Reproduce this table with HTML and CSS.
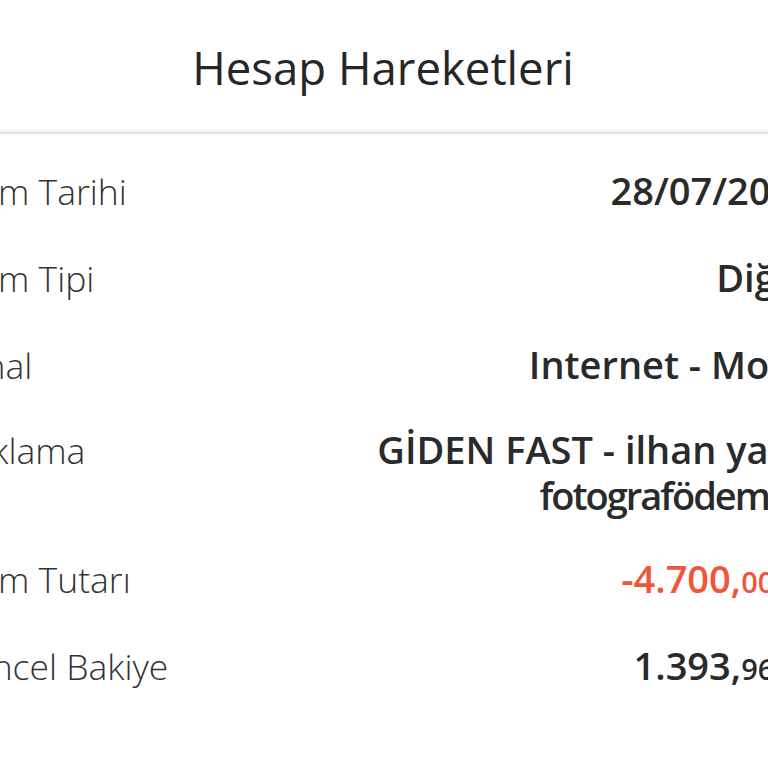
FILE: index.html
```html
<!DOCTYPE html>
<html lang="tr">
<head>
<meta charset="utf-8">
<title>Hesap Hareketleri</title>
<link rel="stylesheet" href="styles.css">
</head>
<body>
<main class="sheet">
  <header class="sheet-header">
    <h1 class="sheet-title">Hesap Hareketleri</h1>
  </header>
  <dl class="details">
    <div class="row">
      <dt class="label">İşlem Tarihi</dt>
      <dd class="value">28/07/2023</dd>
    </div>
    <div class="row">
      <dt class="label">İşlem Tipi</dt>
      <dd class="value">Diğer</dd>
    </div>
    <div class="row">
      <dt class="label">Kanal</dt>
      <dd class="value">Internet - Mobil</dd>
    </div>
    <div class="row">
      <dt class="label">Açıklama</dt>
      <dd class="value">GİDEN FAST - ilhan yalın<br><span class="tight">fotografödemesi</span></dd>
    </div>
    <div class="row">
      <dt class="label">İşlem Tutarı</dt>
      <dd class="value negative">-4.700,<span class="cents">00 TL</span></dd>
    </div>
    <div class="row">
      <dt class="label">Güncel Bakiye</dt>
      <dd class="value">1.393,<span class="cents">96 TL</span></dd>
    </div>
  </dl>
</main>
</body>
</html>
```
FILE: styles.css
```css
html, body {
  margin: 0;
  padding: 0;
  background: #ffffff;
}
body {
  width: 768px;
  height: 768px;
  overflow: hidden;
  font-family: "Open Sans", "Noto Sans", sans-serif;
  color: #2b2b2b;
}
.sheet {
  width: 862px;
  margin-left: -48px;
}
.sheet-header {
  padding: 37px 0 34px;
  border-bottom: 2px solid #dfe6ea;
  box-shadow: 0 -3px 0 #f2f7f9 inset;
  text-align: center;
}
.sheet-title {
  margin: 0;
  font-size: 45.5px;
  line-height: 61px;
  font-weight: 400;
  color: #262626;
}
.details {
  margin: 0 0 0 -7px;
  padding: 13px 0 0;
}
.row {
  box-sizing: border-box;
  min-height: 87px;
  display: grid;
  grid-template-columns: auto 1fr;
  align-items: baseline;
  align-content: center;
  padding: 18px 0;
}
.label {
  margin: 0;
  font-size: 35.5px;
  line-height: 46px;
  font-weight: 300;
  color: #333333;
}
.value {
  margin: 0;
  font-size: 38px;
  line-height: 46px;
  font-weight: 600;
  text-align: right;
  color: #2a2a2a;
}
.value.negative {
  color: #f0553a;
}
.tight {
  letter-spacing: -2px;
}
.cents {
  font-size: 29px;
}
```
